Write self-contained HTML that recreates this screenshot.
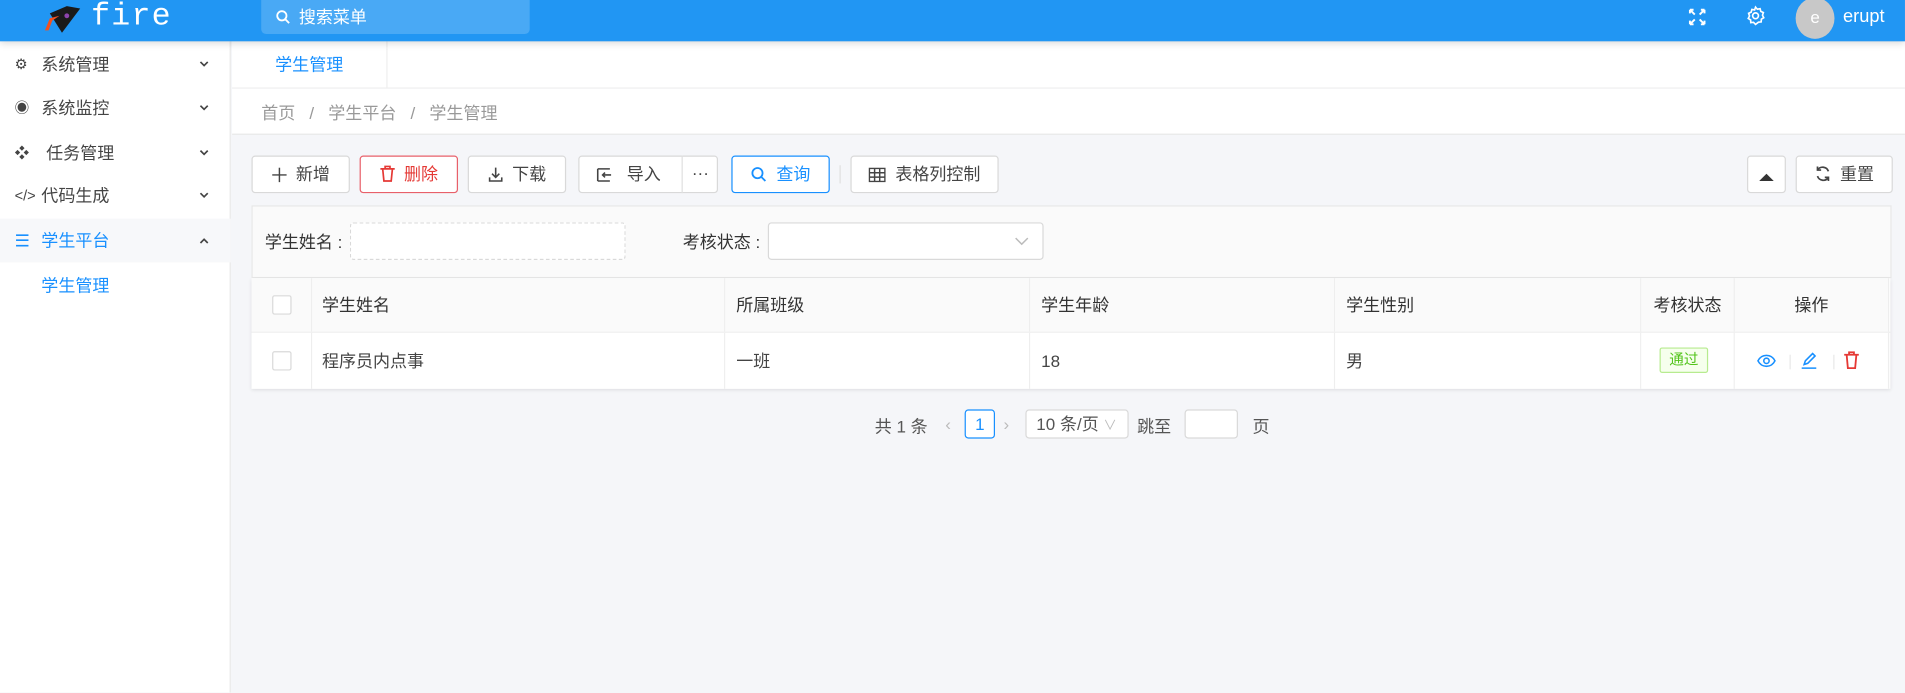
<!DOCTYPE html>
<html><head><meta charset="utf-8">
<style>
*{box-sizing:border-box;margin:0;padding:0}
html,body{width:1905px;height:692px;overflow:hidden;background:#f5f6f9}
#w{position:absolute;left:0;top:0;width:1568px;height:570px;transform:scale(1.2149);transform-origin:0 0;font-family:"Liberation Sans","Noto Sans CJK SC",sans-serif;font-size:14px;color:#555;background:#f5f6f9}
.a{position:absolute}
.hdr{left:0;top:0;width:1568px;height:34px;background:#2196f3;box-shadow:0 2px 6px rgba(0,0,0,.15);z-index:3}
.side{left:0;top:34px;width:190px;height:536px;background:#fff;border-right:1px solid #e8e8e8}
.mi{position:absolute;left:0;width:190px;height:36px;line-height:36px;color:#444;font-size:14px}
.mi .ic{position:absolute;left:12px;top:0;font-size:12px}
.mi .t{position:absolute;left:34px}
.mi svg.ch{position:absolute;left:164px;top:15px}
.btn{position:absolute;top:128px;height:31px;background:#fff;border:1px solid #d9d9d9;border-radius:3px;line-height:29px;text-align:center;color:#444;font-size:14px}
.btn svg{vertical-align:-2px;margin-right:8px}
.th{position:absolute;top:229px;height:44px;line-height:44px;border-right:1px solid #eee;color:#333;background:#fafafa}
.td{position:absolute;top:273px;height:46px;line-height:46px;border-right:1px solid #eee;color:#444;background:#fff}
.cb{position:absolute;left:17px;width:16px;height:16px;border:1px solid #d9d9d9;border-radius:2px;background:#fff}
</style></head><body><div id="w">
<div class="a hdr">
 <svg class="a" style="left:35px;top:3px" width="34" height="26" viewBox="0 0 34 26"><path d="M6 8 L20 2 L31 4 L16 24 Z" fill="#1a1a1a"/><path d="M2 22 L6 12 L14 10 L8 14 L5 22Z" fill="#f4511e"/><circle cx="20" cy="10" r="2" fill="#8e44ad"/></svg>
 <div class="a" style="left:75px;top:-2px;font-family:'Liberation Mono',monospace;font-size:26px;color:#fff;letter-spacing:1px">fire</div>
 <div class="a" style="left:215px;top:0;width:221px;height:28px;background:rgba(255,255,255,.18);border-radius:0 0 4px 4px"></div>
 <svg class="a" style="left:227px;top:8px" width="12" height="12" viewBox="0 0 12 12"><circle cx="5" cy="5" r="3.8" fill="none" stroke="#fff" stroke-width="1.5"/><path d="M8 8 L11 11" stroke="#fff" stroke-width="1.5"/></svg>
 <div class="a" style="left:246px;top:4px;color:#fff;font-size:14px">搜索菜单</div>
 <svg class="a" style="left:1389px;top:6px" width="16" height="16" viewBox="0 0 16 16" fill="none" stroke="#fff" stroke-width="1.6"><path d="M2 2l4 4M2 2v3M2 2h3M14 2l-4 4M14 2v3M14 2h-3M2 14l4-4M2 14v-3M2 14h3M14 14l-4-4M14 14v-3M14 14h-3"/></svg>
 <svg class="a" style="left:1436px;top:4px" width="18" height="18" viewBox="0 0 24 24" fill="none" stroke="#fff" stroke-width="1.8"><circle cx="12" cy="12" r="3.2"/><path d="M12 2.5l2 2.3 3-.6.8 3 2.8 1.3-1 2.9 1.4 2.7-2.6 1.6-.2 3-3 .3L12 21.5l-2.2-2.3-3 .3-.2-3-2.6-1.6 1.4-2.7-1-2.9 2.8-1.3.8-3 3 .6z"/></svg>
 <div class="a" style="left:1478px;top:-2px;width:32px;height:34px;border-radius:50%;background:#c8c8c8;color:#fff;text-align:center;line-height:32px;font-size:14px">e</div>
 <div class="a" style="left:1517px;top:5px;color:#fff;font-size:15px">erupt</div>
</div>
<div class="a side">
 <div class="mi" style="top:1px"><span class="ic">⚙</span><span class="t">系统管理</span><svg class="ch" width="8" height="6" viewBox="0 0 8 6"><path d="M1 1l3 3 3-3" fill="none" stroke="#444" stroke-width="1.4"/></svg></div>
 <div class="mi" style="top:37px"><span class="ic">◉</span><span class="t">系统监控</span><svg class="ch" width="8" height="6" viewBox="0 0 8 6"><path d="M1 1l3 3 3-3" fill="none" stroke="#444" stroke-width="1.4"/></svg></div>
 <div class="mi" style="top:74px"><span class="ic">❖</span><span class="t" style="left:38px">任务管理</span><svg class="ch" width="8" height="6" viewBox="0 0 8 6"><path d="M1 1l3 3 3-3" fill="none" stroke="#444" stroke-width="1.4"/></svg></div>
 <div class="mi" style="top:109px"><span class="ic">&lt;/&gt;</span><span class="t">代码生成</span><svg class="ch" width="8" height="6" viewBox="0 0 8 6"><path d="M1 1l3 3 3-3" fill="none" stroke="#444" stroke-width="1.4"/></svg></div>
 <div class="mi" style="top:146px;background:#f7f8fa;color:#1890ff"><span class="ic" style="font-size:14px">☰</span><span class="t">学生平台</span><svg class="ch" width="8" height="6" viewBox="0 0 8 6"><path d="M1 5l3-3 3 3" fill="none" stroke="#444" stroke-width="1.4"/></svg></div>
 <div class="mi" style="top:183px;color:#1890ff"><span class="t">学生管理</span></div>
</div>
<div class="a" style="left:191px;top:34px;width:1377px;height:39px;background:#fff;border-bottom:1px solid #eee"></div>
<div class="a" style="left:191px;top:34px;width:128px;height:39px;border-right:1px solid #eee;color:#1890ff;text-align:center;line-height:38px">学生管理</div>
<div class="a" style="left:191px;top:73px;width:1377px;height:38px;background:#fff;border-bottom:1px solid #e8e8e8"></div>
<div class="a" style="left:215px;top:83px;color:#999">首页 &nbsp; / &nbsp; 学生平台 &nbsp; / &nbsp; 学生管理</div>

<div class="btn" style="left:207px;width:81px"><svg width="12" height="12" viewBox="0 0 12 12"><path d="M6 0v12M0 6h12" stroke="#444" stroke-width="1.2"/></svg>新增</div>
<div class="btn" style="left:296px;width:81px;border-color:#e8606a;color:#e53935"><svg width="12" height="14" viewBox="0 0 12 14" fill="none" stroke="#e53935" stroke-width="1.4"><path d="M0 3h12M4 3V1h4v2M2 3l1 10h6l1-10"/></svg>删除</div>
<div class="btn" style="left:385px;width:81px"><svg width="12" height="13" viewBox="0 0 12 13" fill="none" stroke="#444" stroke-width="1.3"><path d="M6 1v8M3 6l3 3 3-3M1 9v3h10V9"/></svg>下载</div>
<div class="btn" style="left:476px;width:115px;text-align:left;padding-left:14px"><svg width="13" height="12" viewBox="0 0 13 12" fill="none" stroke="#444" stroke-width="1.3"><path d="M1 1v10M1 1h10M1 11h10M5 6h7M7 4L5 6l2 2"/></svg> 导入<span style="position:absolute;left:84px;top:-1px;height:31px;border-left:1px solid #e0e0e0;width:30px;text-align:center">···</span></div>
<div class="btn" style="left:602px;width:81px;border-color:#1890ff;color:#1890ff"><svg width="13" height="13" viewBox="0 0 13 13" fill="none" stroke="#1890ff" stroke-width="1.5"><circle cx="5.5" cy="5.5" r="4.2"/><path d="M8.5 8.5l3.5 3.5"/></svg>查询</div>
<div class="a" style="left:691px;top:136px;height:15px;border-left:1px solid #e0e0e0"></div>
<div class="btn" style="left:700px;width:122px"><svg width="14" height="12" viewBox="0 0 14 12" fill="none" stroke="#444" stroke-width="1.2"><rect x=".6" y=".6" width="12.8" height="10.8"/><path d="M.6 4.2h12.8M.6 7.8h12.8M4.9.6v10.8M9.1.6v10.8"/></svg>表格列控制</div>
<div class="btn" style="left:1438px;width:32px"><svg width="12" height="8" viewBox="0 0 12 8" style="margin:0"><path d="M0 7L6 1l6 6z" fill="#333"/></svg></div>
<div class="btn" style="left:1478px;width:80px"><svg width="13" height="14" viewBox="0 0 13 14" fill="none" stroke="#444" stroke-width="1.4"><path d="M11 5A5 5 0 0 0 2 4M2 9a5 5 0 0 0 9 1"/><path d="M2 1v3h3M11 13v-3H8"/></svg>重置</div>

<div class="a" style="left:207px;top:169px;width:1350px;height:60px;background:#fafafa;border:1px solid #e8e8e8"></div>
<div class="a" style="left:218px;top:189px;color:#333">学生姓名 :</div>
<div class="a" style="left:288px;top:183px;width:227px;height:31px;background:#fff;border:1px dashed #d9d9d9;border-radius:3px"></div>
<div class="a" style="left:562px;top:189px;color:#333">考核状态 :</div>
<div class="a" style="left:632px;top:183px;width:227px;height:31px;background:#fff;border:1px solid #d9d9d9;border-radius:3px"><svg class="a" style="left:202px;top:11px" width="12" height="8" viewBox="0 0 12 8"><path d="M1 1l5 5 5-5" fill="none" stroke="#bbb" stroke-width="1.2"/></svg></div>

<div class="a" style="left:207px;top:229px;width:1349px;height:91px;background:#fff;box-shadow:0 1px 3px rgba(0,0,0,.1)"></div>
<div class="th" style="left:207px;width:50px"><span class="cb" style="top:14px"></span></div>
<div class="th" style="left:257px;width:340px;padding-left:8px">学生姓名</div>
<div class="th" style="left:597px;width:251px;padding-left:9px">所属班级</div>
<div class="th" style="left:848px;width:251px;padding-left:9px">学生年龄</div>
<div class="th" style="left:1099px;width:252px;padding-left:9px">学生性别</div>
<div class="th" style="left:1351px;width:77px;text-align:center">考核状态</div>
<div class="th" style="left:1428px;width:127px;text-align:center">操作</div>
<div class="a" style="left:207px;top:273px;width:1349px;border-top:1px solid #eee"></div>
<div class="td" style="left:207px;width:50px;top:274px"><span class="cb" style="top:15px"></span></div>
<div class="td" style="left:257px;width:340px;padding-left:8px;top:274px">程序员内点事</div>
<div class="td" style="left:597px;width:251px;padding-left:9px;top:274px">一班</div>
<div class="td" style="left:848px;width:251px;padding-left:9px;top:274px">18</div>
<div class="td" style="left:1099px;width:252px;padding-left:9px;top:274px">男</div>
<div class="td" style="left:1351px;width:77px;top:274px"><span class="a" style="left:15px;top:12px;width:40px;height:21px;border:1px solid #b7eb8f;background:#f6ffed;color:#52c41a;font-size:12px;line-height:19px;text-align:center;border-radius:2px">通过</span></div>
<div class="td" style="left:1428px;width:127px;top:274px">
 <svg class="a" style="left:18px;top:17px" width="16" height="12" viewBox="0 0 16 12" fill="none" stroke="#1890ff" stroke-width="1.3"><path d="M1 6c3-6 11-6 14 0-3 6-11 6-14 0z"/><circle cx="8" cy="6" r="2.2"/></svg>
 <span class="a" style="left:45px;top:18px;height:12px;border-left:1px solid #e8e8e8"></span>
 <svg class="a" style="left:54px;top:15px" width="14" height="15" viewBox="0 0 14 15" fill="none" stroke="#1890ff" stroke-width="1.3"><path d="M3 11l1-3 6-6 2 2-6 6zM1 14h12"/></svg>
 <span class="a" style="left:81px;top:18px;height:12px;border-left:1px solid #e8e8e8"></span>
 <svg class="a" style="left:89px;top:15px" width="14" height="15" viewBox="0 0 14 15" fill="none" stroke="#e53935" stroke-width="1.5"><path d="M1 3h12M5 3V1h4v2M3 3l1 11h6l1-11"/></svg>
</div>

<div class="a" style="left:720px;top:341px;color:#555">共 1 条</div>
<div class="a" style="left:778px;top:341px;color:#bbb">‹</div>
<div class="a" style="left:794px;top:337px;width:25px;height:24px;border:1px solid #1890ff;border-radius:3px;color:#1890ff;text-align:center;line-height:22px;background:#fff">1</div>
<div class="a" style="left:826px;top:341px;color:#bbb">›</div>
<div class="a" style="left:844px;top:337px;width:85px;height:24px;border:1px solid #d9d9d9;border-radius:3px;background:#fff;line-height:22px;padding-left:8px;color:#555">10 条/页 <span style="color:#bbb;font-size:11px">∨</span></div>
<div class="a" style="left:936px;top:341px">跳至</div>
<div class="a" style="left:975px;top:337px;width:44px;height:24px;border:1px solid #d9d9d9;border-radius:3px;background:#fff"></div>
<div class="a" style="left:1031px;top:341px">页</div>
</div></body></html>
